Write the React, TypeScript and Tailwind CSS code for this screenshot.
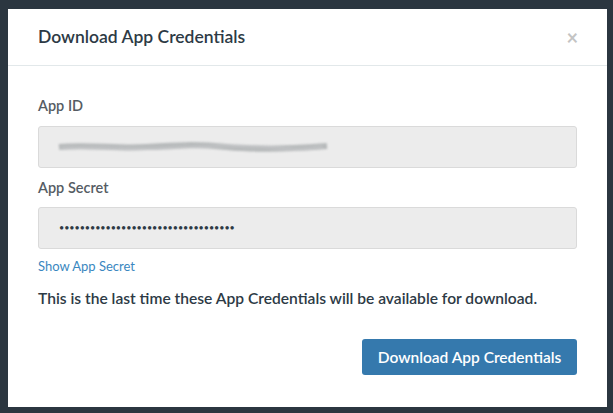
import React from "react";

export default function App() {
  const font = { fontFamily: "Lato, 'Noto Sans', sans-serif" };
  return (
    <div className="h-[413px] w-[613px] bg-[#2b3640] pl-[8px] pr-[6px] pt-[9px] pb-[6px]" style={font}>
      <div className="flex h-full w-full flex-col bg-white">
        {/* header */}
        <div className="flex h-[57px] items-center justify-between border-b border-[#e2e8ea] pl-[30px] pr-[29px]">
          <h2 className="text-[17.5px] font-semibold text-[#2d3a45]">Download App Credentials</h2>
          <span className="text-[20px] font-bold leading-none text-[#c4c4c4]">×</span>
        </div>

        {/* body */}
        <div className="flex flex-col px-[30px] pt-[29px]">
          <label className="text-[14.5px] font-semibold text-[#555c63]">App ID</label>
          <div className="mt-[9px] flex h-[42px] items-center rounded-[3px] border border-[#dadada] bg-[#ececec] pl-[18px]">
            <svg width="272" height="16" viewBox="0 0 272 16" className="blur-[0.8px]">
              <path
                d="M2 8 C 30 5, 60 10, 90 8 S 140 5, 170 8 S 230 10, 270 7"
                stroke="#a9acae"
                strokeWidth="6"
                fill="none"
                opacity="0.8"
              />
              <path
                d="M4 9 C 40 7, 70 11, 110 9 S 180 6, 220 9 S 250 8, 266 8"
                stroke="#bfc1c3"
                strokeWidth="3"
                fill="none"
              />
            </svg>
          </div>

          <label className="mt-[9px] text-[14.5px] font-semibold text-[#555c63]">App Secret</label>
          <div className="mt-[8px] flex h-[42px] items-center rounded-[3px] border border-[#dadada] bg-[#ececec] pl-[20px]">
            <span className="text-[9px] tracking-[-0.05px] text-[#2d3a45]">
              {"•".repeat(34)}
            </span>
          </div>

          <a className="mt-[8px] text-[13px] text-[#3a87c0]">Show App Secret</a>
          <p className="mt-[11px] text-[15.6px] font-semibold text-[#2d3a45]">
            This is the last time these App Credentials will be available for download.
          </p>

          <div className="mt-[29px] flex justify-end">
            <button className="h-[36px] w-[215px] rounded-[3px] bg-[#3579ad] text-[15.5px] font-semibold text-white">
              Download App Credentials
            </button>
          </div>
        </div>
      </div>
    </div>
  );
}
